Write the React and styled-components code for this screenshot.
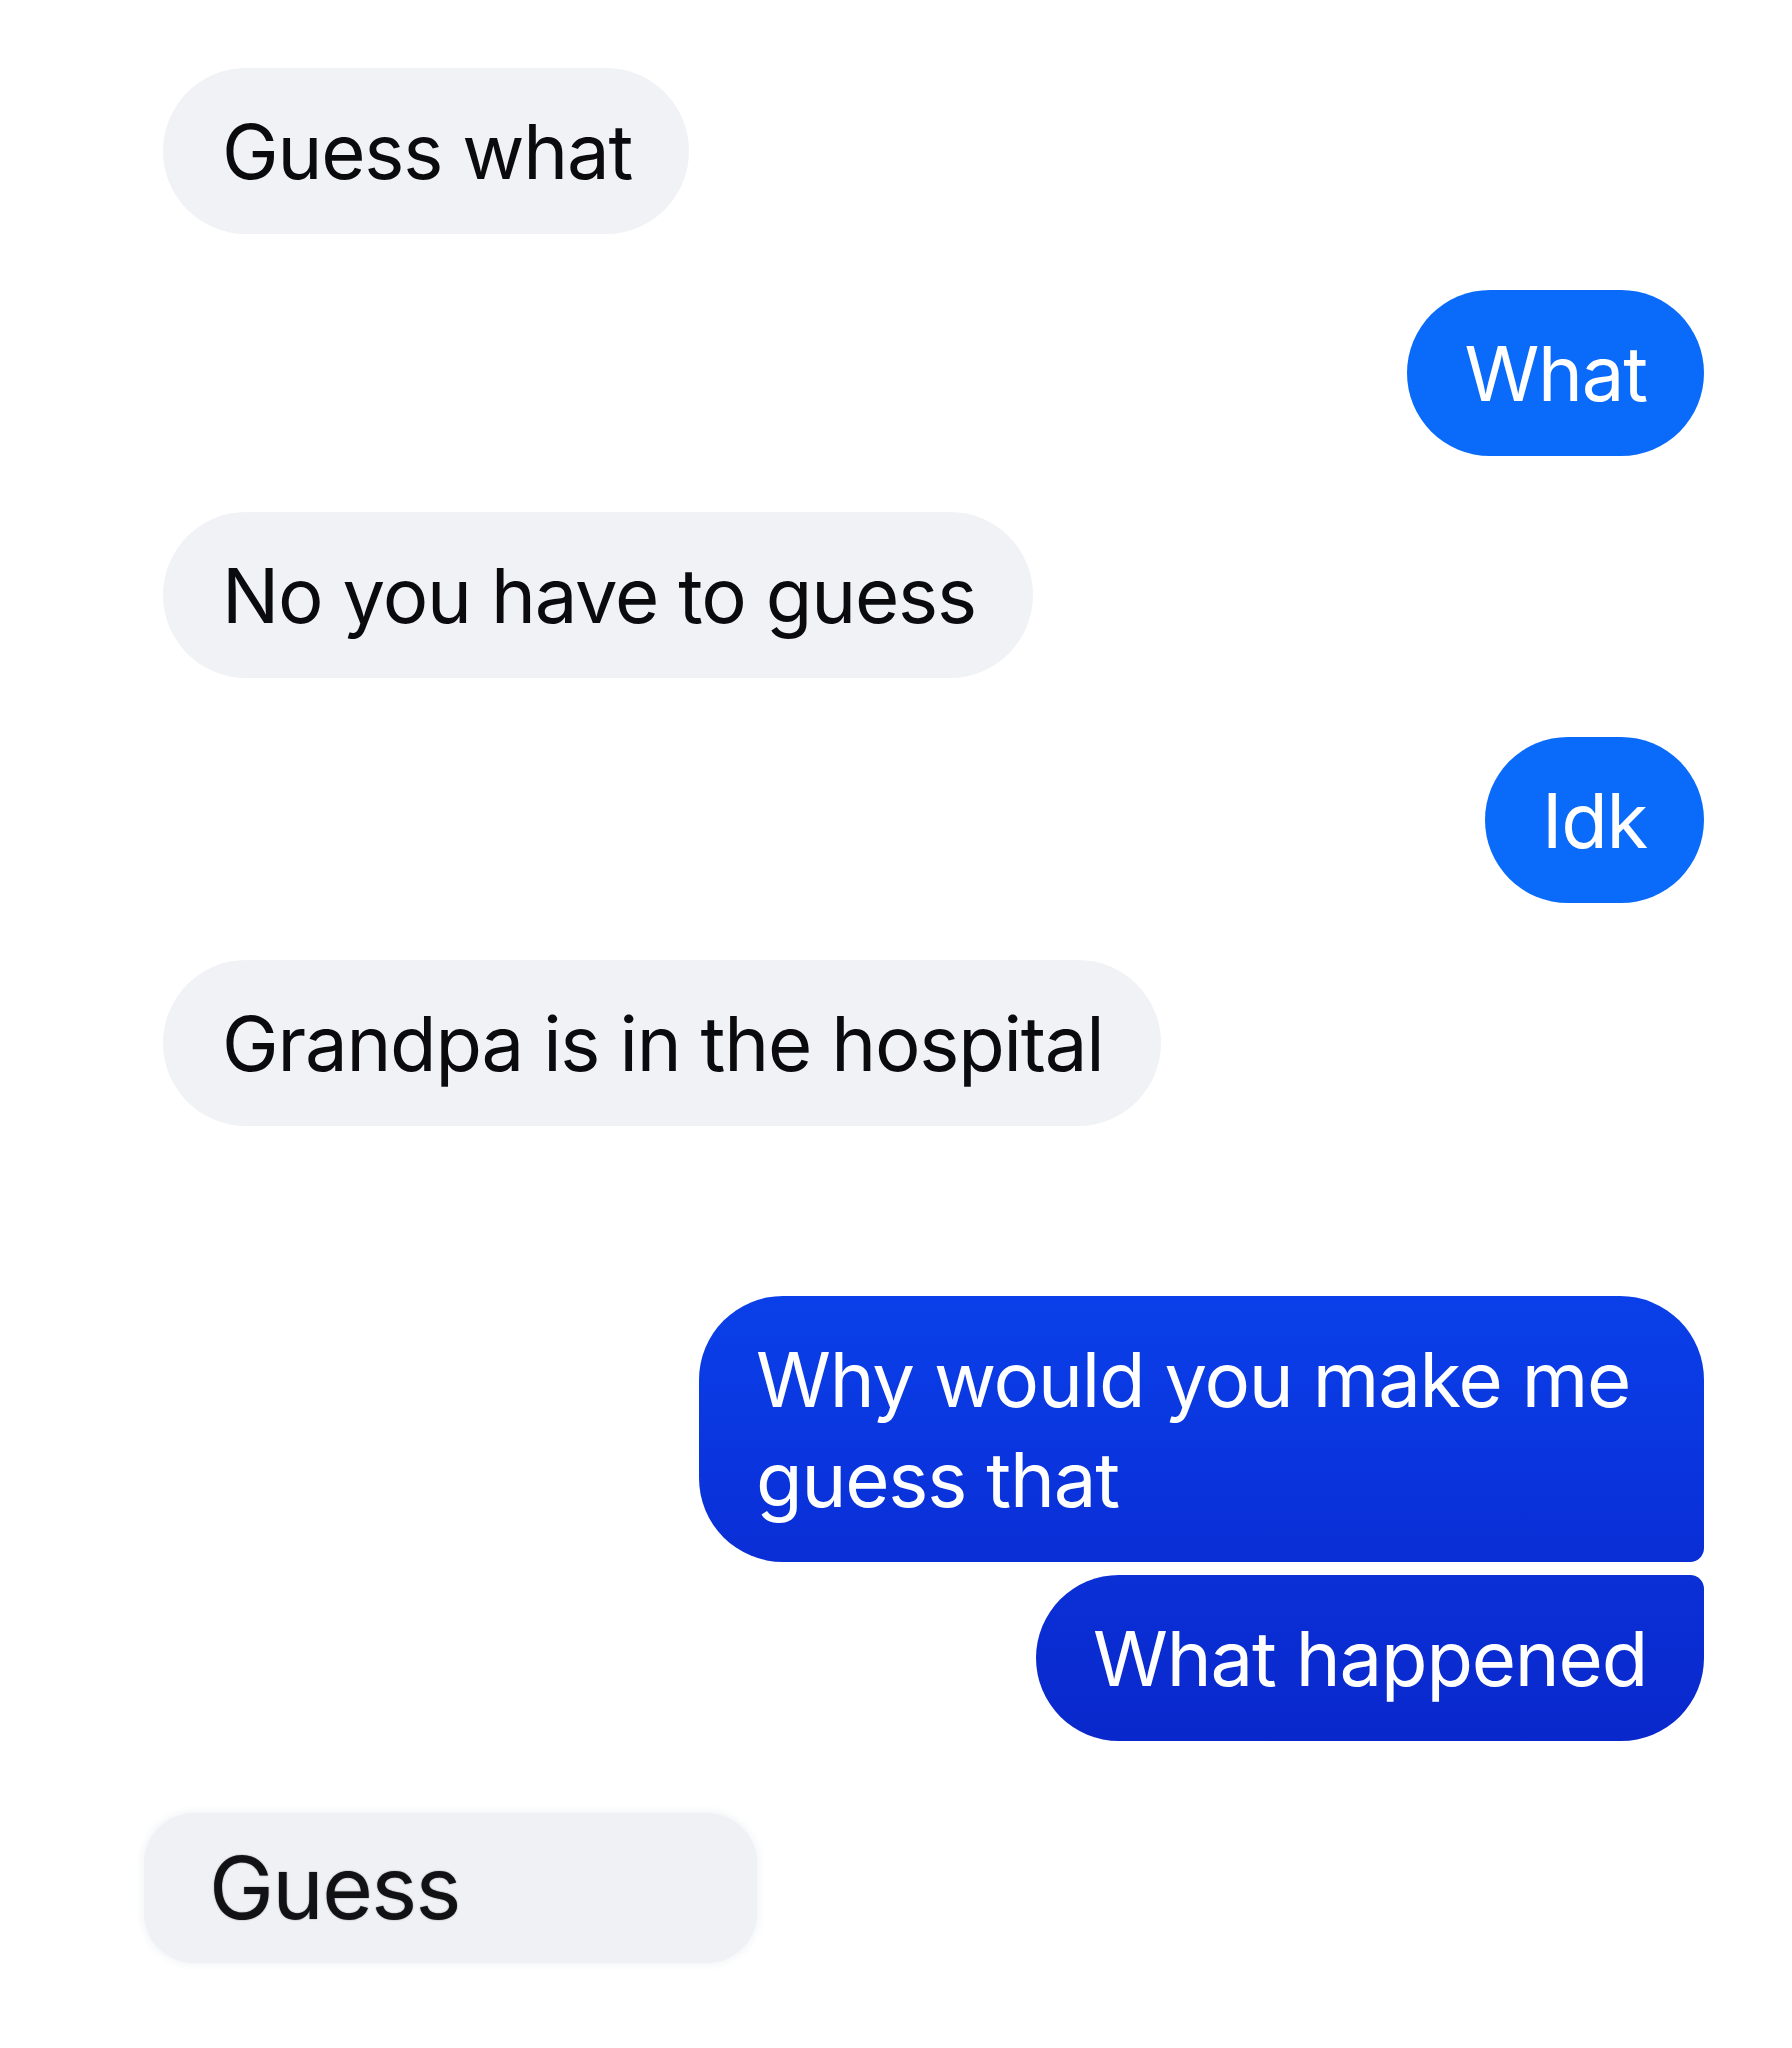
import styled, { createGlobalStyle } from 'styled-components';

const messages = [
  { id: 1, from: 'them', text: 'Guess what', gap: 68 },
  { id: 2, from: 'me', text: 'What', gap: 56, tone: 'light' },
  { id: 3, from: 'them', text: 'No you have to guess', gap: 56 },
  { id: 4, from: 'me', text: 'Idk', gap: 59, tone: 'light' },
  { id: 5, from: 'them', text: 'Grandpa is in the hospital', gap: 57 },
  { id: 6, from: 'me', text: 'Why would you make me guess that', gap: 170, tone: 'deep', tail: 'bottom' },
  { id: 7, from: 'me', text: 'What happened', gap: 13, tone: 'deeper', tail: 'top' },
];

function App() {
  return (
    <>
      <GlobalStyle />
      <Thread>
        {messages.map((m) => (
          <Row key={m.id} $mine={m.from === 'me'} $gap={m.gap}>
            {m.from === 'me' ? (
              <Sent $tone={m.tone} $tail={m.tail}>{m.text}</Sent>
            ) : (
              <Received>{m.text}</Received>
            )}
          </Row>
        ))}
        <Row $gap={72}>
          <Pasted>Guess</Pasted>
        </Row>
      </Thread>
    </>
  );
}

export default App;

const GlobalStyle = createGlobalStyle`
  body {
    margin: 0;
    background: #ffffff;
    font-family: Inter, "Noto Sans", "Liberation Sans", sans-serif;
  }
`;

const Thread = styled.main`
  display: flex;
  flex-direction: column;
  width: 1792px;
  min-height: 2048px;
  box-sizing: border-box;
  padding: 0 88px 0 163px;
`;

const Row = styled.div`
  display: flex;
  justify-content: ${(p) => (p.$mine ? 'flex-end' : 'flex-start')};
  margin-top: ${(p) => p.$gap}px;
`;

const Bubble = styled.div`
  box-sizing: border-box;
  width: fit-content;
  max-width: 1005px;
  padding: 33px 57px;
  border-radius: 84px;
  font-size: 76px;
  line-height: 100px;
  letter-spacing: -1.2px;
  font-weight: 400;
`;

const Received = styled(Bubble)`
  max-width: none;
  white-space: nowrap;
  background: #f1f2f6;
  color: #0b0b0d;
  padding-left: 59px;
`;

const tones = {
  light: '#0a6bfb',
  deep: 'linear-gradient(180deg, #0a40e9 0%, #0a35de 60%, #0a2ed6 100%)',
  deeper: 'linear-gradient(180deg, #0a30d6 0%, #0928cc 100%)',
};

const Sent = styled(Bubble)`
  background: ${(p) => tones[p.$tone]};
  color: #ffffff;
  border-top-right-radius: ${(p) => (p.$tail === 'top' ? '14px' : '84px')};
  border-bottom-right-radius: ${(p) => (p.$tail === 'bottom' ? '14px' : '84px')};
`;

const Pasted = styled(Bubble)`
  width: 613px;
  margin-left: -19px;
  padding: 25px 65px;
  border-radius: 50px;
  background: #eff1f5;
  box-shadow: 0 0 8px 2px #f2f4f7;
  color: #121214;
  font-size: 87px;
  letter-spacing: -1.6px;
  text-shadow: 0 0 1.5px rgba(0, 0, 0, 0.55);
`;
